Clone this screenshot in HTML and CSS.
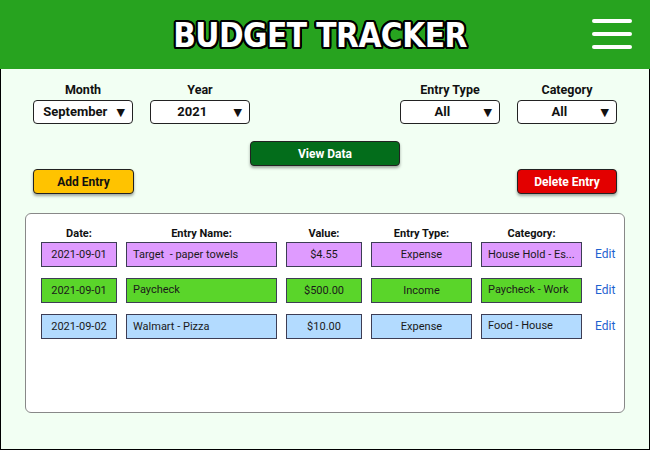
FILE: index.html
```html
<!DOCTYPE html>
<html>
<head>
<meta charset="utf-8">
<link rel="stylesheet" href="styles.css">
</head>
<body>
<header class="topbar">
  <h1 class="title">BUDGET TRACKER</h1>
  <div class="menu" aria-label="menu"><span></span><span></span><span></span></div>
</header>
<main class="main">
  <div class="filters">
    <div class="filter-set">
      <div class="filter">
        <div class="filter-label">Month</div>
        <div class="select"><span class="select-val">September</span><span class="arrow">▼</span></div>
      </div>
      <div class="filter">
        <div class="filter-label">Year</div>
        <div class="select"><span class="select-val">2021</span><span class="arrow">▼</span></div>
      </div>
    </div>
    <div class="filter-set">
      <div class="filter">
        <div class="filter-label">Entry Type</div>
        <div class="select"><span class="select-val">All</span><span class="arrow">▼</span></div>
      </div>
      <div class="filter">
        <div class="filter-label">Category</div>
        <div class="select"><span class="select-val">All</span><span class="arrow">▼</span></div>
      </div>
    </div>
  </div>
  <div class="view-row"><button class="btn btn-view">View Data</button></div>
  <div class="action-row">
    <button class="btn btn-add">Add Entry</button>
    <button class="btn btn-del">Delete Entry</button>
  </div>
  <section class="panel">
    <div class="grid grid-head">
      <div class="head">Date:</div>
      <div class="head">Entry Name:</div>
      <div class="head">Value:</div>
      <div class="head">Entry Type:</div>
      <div class="head">Category:</div>
      <div class="head"></div>
    </div>
    <div class="grid grid-body">
      <div class="cell purple center">2021-09-01</div>
      <div class="cell purple">Target&nbsp; - paper towels</div>
      <div class="cell purple center">$4.55</div>
      <div class="cell purple center">Expense</div>
      <div class="cell purple">House Hold - Es...</div>
      <div class="edit">Edit</div>

      <div class="cell green center">2021-09-01</div>
      <div class="cell green up">Paycheck</div>
      <div class="cell green center">$500.00</div>
      <div class="cell green center">Income</div>
      <div class="cell green up">Paycheck - Work</div>
      <div class="edit">Edit</div>

      <div class="cell blue center">2021-09-02</div>
      <div class="cell blue">Walmart - Pizza</div>
      <div class="cell blue center">$10.00</div>
      <div class="cell blue center">Expense</div>
      <div class="cell blue up">Food - House</div>
      <div class="edit">Edit</div>
    </div>
  </section>
</main>
</body>
</html>
```

FILE: styles.css
```css
* { box-sizing: border-box; }
html, body { margin: 0; padding: 0; }
body {
  width: 650px;
  height: 450px;
  font-family: Roboto, "Liberation Sans", sans-serif;
  color: #111;
  overflow: hidden;
}
.topbar {
  height: 69px;
  background: #27a31f;
  display: flex;
  align-items: center;
  justify-content: center;
  position: relative;
}
.title {
  margin: 0;
  font-family: "DejaVu Sans Condensed", "DejaVu Sans", sans-serif;
  font-weight: bold;
  font-size: 33px;
  letter-spacing: -0.5px;
  color: #fff;
  margin-left: -10px;
  margin-top: 1px;
  text-shadow:
    2px 0 0 #000, -2px 0 0 #000, 0 2px 0 #000, 0 -2px 0 #000,
    1.5px 1.5px 0 #000, -1.5px 1.5px 0 #000, 1.5px -1.5px 0 #000, -1.5px -1.5px 0 #000,
    2px 1px 0 #000, -2px 1px 0 #000, 2px -1px 0 #000, -2px -1px 0 #000,
    1px 2px 0 #000, -1px 2px 0 #000, 1px -2px 0 #000, -1px -2px 0 #000;
}
.menu {
  position: absolute;
  right: 18px;
  top: 19px;
  width: 40px;
  display: flex;
  flex-direction: column;
  gap: 9px;
}
.menu span {
  display: block;
  height: 4px;
  background: #fff;
  border-radius: 2px;
}
.main {
  height: 381px;
  background: #f2fff3;
  border: 1px solid #000;
  border-top: none;
  padding: 13px 32px 0;
}
.filters {
  display: flex;
  justify-content: space-between;
}
.filter-set {
  display: flex;
  gap: 17px;
}
.filter {
  width: 100px;
  display: flex;
  flex-direction: column;
  align-items: center;
}
.filter-label {
  font-size: 12.5px;
  font-weight: bold;
  line-height: 16px;
  margin-bottom: 2px;
}
.select {
  width: 100px;
  height: 24px;
  background: #fff;
  border: 1px solid #222;
  border-radius: 4px;
  display: flex;
  align-items: center;
  padding: 0 7px 0 6px;
}
.select-val {
  flex: 1;
  text-align: center;
  font-size: 13px;
  font-weight: bold;
  margin-top: -1px;
}
.arrow {
  font-size: 11px;
  font-family: "DejaVu Sans", sans-serif;
  margin-left: 6px;
}
.btn {
  font-family: Roboto, "Liberation Sans", sans-serif;
  font-size: 12px;
  font-weight: bold;
  height: 25px;
  border: 1px solid #222;
  border-radius: 4px;
  box-shadow: 0 2px 3px rgba(0,0,0,0.35);
  padding: 0;
  cursor: pointer;
}
.view-row {
  display: flex;
  justify-content: center;
  margin-top: 17px;
}
.btn-view {
  width: 150px;
  background: #036d1b;
  color: #fff;
}
.action-row {
  display: flex;
  justify-content: space-between;
  margin-top: 3px;
}
.btn-add {
  width: 101px;
  background: #ffc300;
  color: #111;
}
.btn-del {
  width: 100px;
  background: #e30000;
  color: #fff;
}
.panel {
  margin: 19px -8px 0;
  height: 200px;
  background: #fff;
  border: 1px solid #888;
  border-radius: 6px;
  padding: 12px 0 0 15px;
}
.grid {
  display: grid;
  grid-template-columns: 76px 151px 76px 101px 101px 30px;
  column-gap: 9px;
}
.grid-body {
  grid-auto-rows: 25px;
  row-gap: 11px;
}
.head {
  font-size: 11px;
  font-weight: bold;
  text-align: center;
  line-height: 16px;
}
.cell {
  height: 25px;
  border: 1px solid #3d3d55;
  font-size: 11px;
  line-height: 23px;
  padding: 0 6px;
  white-space: nowrap;
  overflow: hidden;
  color: #1a1a1a;
}
.center { text-align: center; }
.up { line-height: 21px; }
.purple { background: #df9bff; }
.green { background: #5ad52a; }
.blue { background: #b3dbff; }
.edit {
  font-size: 12px;
  color: #1e62d0;
  line-height: 25px;
  padding-left: 4px;
}
```
